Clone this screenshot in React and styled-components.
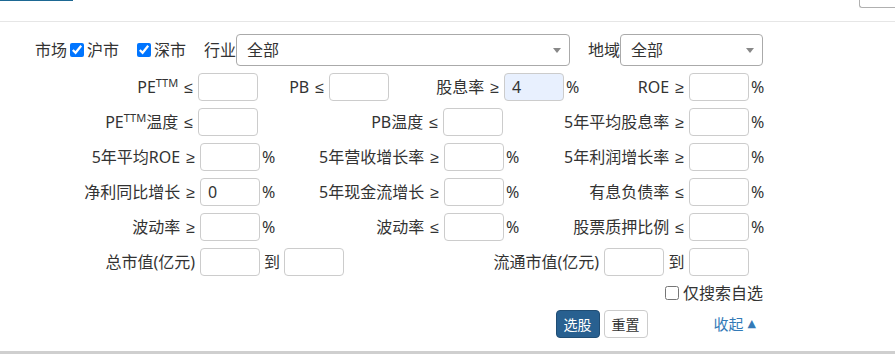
import React from 'react';
import styled, { createGlobalStyle } from 'styled-components';

const Global = createGlobalStyle`
  html, body { margin: 0; padding: 0; background: #fff; }
  body {
    font-family: "Noto Sans", "Noto Sans CJK SC", sans-serif;
    color: #333;
    font-size: 16px;
  }
  * { box-sizing: border-box; }
`;

const Page = styled.div`
  width: 895px;
  height: 354px;
  display: flex;
  flex-direction: column;
  overflow: hidden;
`;

const Header = styled.div`
  height: 22px;
  flex: none;
  border-bottom: 1px solid #e6e6e6;
  display: flex;
  justify-content: space-between;
  align-items: flex-start;
`;

const ActiveTab = styled.div`
  width: 73px;
  height: 1px;
  background: #1d6893;
`;

const CornerBox = styled.div`
  width: 36px;
  height: 8px;
  border: 1px solid #b0b0b0;
  border-top: none;
  border-right: none;
  border-radius: 0 0 0 3px;
`;

const Form = styled.div`
  width: 765px;
  padding-top: 12px;
  display: flex;
  flex-direction: column;
  gap: 7px;
`;

const Row = styled.div`
  display: flex;
  align-items: center;
  height: ${p => p.$h || 28}px;
  padding-left: ${p => p.$pl || 0}px;
  justify-content: ${p => (p.$end ? 'flex-end' : 'flex-start')};
  line-height: 1;
  white-space: nowrap;
`;

const Text = styled.span`
  margin-left: ${p => p.$ml || 0}px;
  font-size: 16px;
  line-height: 20px;
`;

const Check = styled.input.attrs({ type: 'checkbox' })`
  width: 14px;
  height: 14px;
  margin: 0 0 0 ${p => p.$ml || 0}px;
  accent-color: #0075ff;
`;

const SelectBox = styled.div`
  width: ${p => p.$w}px;
  height: 32px;
  border: 1px solid #aaa;
  border-radius: 4px;
  display: flex;
  align-items: center;
  justify-content: space-between;
  padding: 0 8px 0 10px;
  font-size: 16px;
  color: #333;
  background: #fff;
`;

const Arrow = styled.span`
  width: 0;
  height: 0;
  border-style: solid;
  border-width: 5px 4px 0 4px;
  border-color: #888 transparent transparent transparent;
`;

const Label = styled.span`
  width: ${p => p.$w}px;
  flex: none;
  text-align: ${p => (p.$center ? 'center' : 'right')};
  padding-right: ${p => (p.$center ? 0 : 5)}px;
  font-size: 16px;
  line-height: 28px;
  white-space: nowrap;
`;

const Cmp = styled.span`
  font-family: "Liberation Sans", sans-serif;
  font-size: 16px;
  margin-left: 6px;
`;

const Sup = styled.sup`
  font-size: 11px;
  line-height: 0;
  vertical-align: 6px;
`;

const TextBox = styled.input.attrs({ type: 'text' })`
  width: 60px;
  height: 28px;
  flex: none;
  margin: 0;
  border: 1px solid #ccc;
  border-radius: 4px;
  padding: 0 7px;
  font-family: "Noto Sans", "Noto Sans CJK SC", sans-serif;
  font-size: 16px;
  color: #333;
  background: ${p => (p.$filled ? '#e8f0fe' : '#fff')};
  outline: none;
`;

const Suffix = styled.span`
  width: ${p => p.$w || 16}px;
  flex: none;
  padding-left: 2px;
  font-size: 16px;
  line-height: 28px;
`;

const Button = styled.button`
  height: 28px;
  padding: 0 7px;
  margin-left: ${p => p.$ml || 0}px;
  border-radius: 4px;
  font-family: "Noto Sans CJK SC", sans-serif;
  font-size: 14px;
  line-height: 26px;
  border: 1px solid ${p => (p.$primary ? '#204d74' : '#ccc')};
  background: ${p => (p.$primary ? '#286090' : '#fff')};
  color: ${p => (p.$primary ? '#fff' : '#333')};
`;

const Toggle = styled.a`
  margin-left: 66px;
  margin-right: 9px;
  color: #337ab7;
  font-size: 15px;
  line-height: 20px;
  text-decoration: none;
  display: flex;
  align-items: center;
  gap: 4px;
`;

const Tri = styled.span`
  font-family: "DejaVu Sans", sans-serif;
  font-size: 11px;
`;

const Spacer = styled.div`
  flex: 1;
`;

const BottomBar = styled.div`
  height: 3px;
  flex: none;
  background: #cfcfcf;
`;

const PE = () => (
  <>
    PE<Sup>TTM</Sup>
  </>
);

function Field({ w, label, op, value, filled, pct }) {
  return (
    <>
      <Label $w={w}>
        {label}
        {op && <Cmp>{op}</Cmp>}
      </Label>
      <TextBox $filled={filled} defaultValue={value || ''} />
      {pct && <Suffix>%</Suffix>}
    </>
  );
}

export default function App() {
  return (
    <Page>
      <Global />
      <Header>
        <ActiveTab />
        <CornerBox />
      </Header>
      <Form>
        <Row $h={32} $pl={35}>
          <Text>市场</Text>
          <Check $ml={3} defaultChecked />
          <Text $ml={3}>沪市</Text>
          <Check $ml={18} defaultChecked />
          <Text $ml={3}>深市</Text>
          <Text $ml={18}>行业</Text>
          <SelectBox $w={334}>
            全部
            <Arrow />
          </SelectBox>
          <Text $ml={18}>地域</Text>
          <SelectBox $w={143}>
            全部
            <Arrow />
          </SelectBox>
        </Row>
        <Row>
          <Field w={198} label={<PE />} op="≤" />
          <Field w={71} label="PB" op="≤" />
          <Field w={115} label="股息率" op="≥" value="4" filled pct />
          <Field w={109} label="ROE" op="≥" pct />
        </Row>
        <Row>
          <Field w={198} label={<><PE />温度</>} op="≤" />
          <Field w={185} label="PB温度" op="≤" />
          <Field w={186} label="5年平均股息率" op="≥" pct />
        </Row>
        <Row>
          <Field w={200} label="5年平均ROE" op="≥" pct />
          <Field w={168} label="5年营收增长率" op="≥" pct />
          <Field w={169} label="5年利润增长率" op="≥" pct />
        </Row>
        <Row>
          <Field w={200} label="净利同比增长" op="≥" value="0" pct />
          <Field w={168} label="5年现金流增长" op="≥" pct />
          <Field w={169} label="有息负债率" op="≤" pct />
        </Row>
        <Row>
          <Field w={200} label="波动率" op="≥" pct />
          <Field w={168} label="波动率" op="≤" pct />
          <Field w={169} label="股票质押比例" op="≤" pct />
        </Row>
        <Row>
          <Field w={200} label="总市值(亿元)" />
          <Label $w={24} $center>到</Label>
          <TextBox />
          <Field w={260} label="流通市值(亿元)" />
          <Label $w={25} $center>到</Label>
          <TextBox />
        </Row>
        <Row $h={20} $end>
          <Check />
          <Text $ml={4}>仅搜索自选</Text>
          <Suffix $w={2} />
        </Row>
        <Row $end>
          <Button $primary>选股</Button>
          <Button $ml={4}>重置</Button>
          <Toggle href="#">
            收起<Tri>▲</Tri>
          </Toggle>
        </Row>
      </Form>
      <Spacer />
      <BottomBar />
    </Page>
  );
}
